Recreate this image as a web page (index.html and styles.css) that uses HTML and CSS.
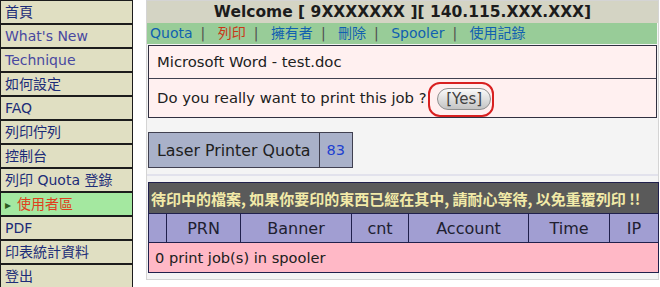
FILE: index.html
```html
<!DOCTYPE html>
<html lang="zh-Hant">
<head>
    <meta charset="UTF-8">
    <title>Printer - 使用者區</title>
    <link rel="stylesheet" href="styles.css">
</head>
<body>

    <ul class="menu">
        <li><a href="#">首頁</a></li>
        <li class="en"><a href="#">What's New</a></li>
        <li class="en"><a href="#">Technique</a></li>
        <li><a href="#">如何設定</a></li>
        <li><a href="#">FAQ</a></li>
        <li><a href="#">列印佇列</a></li>
        <li><a href="#">控制台</a></li>
        <li><a href="#">列印 Quota 登錄</a></li>
        <li class="current"><a href="#">使用者區</a></li>
        <li><a href="#">PDF</a></li>
        <li><a href="#">印表統計資料</a></li>
        <li><a href="#">登出</a></li>
    </ul>

    <div class="panel">
        <div class="welcome">Welcome [ 9XXXXXXX ][ 140.115.XXX.XXX]</div>
        <div class="tabs">
            <a href="#">Quota</a><span class="sep">|</span>
            <a href="#" class="active">列印</a><span class="sep">|</span>
            <a href="#">擁有者</a><span class="sep">|</span>
            <a href="#">刪除</a><span class="sep">|</span>
            <a href="#">Spooler</a><span class="sep">|</span>
            <a href="#">使用記錄</a>
        </div>

        <div class="confirm">
            <div class="confirm-row">Microsoft Word - test.doc</div>
            <div class="confirm-row">
                Do you really want to print this job ?
                <span class="mark"><button class="yes">[Yes]</button></span>
            </div>
        </div>

        <table class="quota">
            <tr>
                <td>Laser Printer Quota</td>
                <td class="num">83</td>
            </tr>
        </table>

        <div class="rule"></div>

        <table class="spool">
            <colgroup>
                <col class="c0">
                <col class="c1">
                <col class="c2">
                <col class="c3">
                <col class="c4">
                <col class="c5">
                <col class="c6">
            </colgroup>
            <tr>
                <th colspan="7" class="notice">待印中的檔案, 如果你要印的東西已經在其中, 請耐心等待, 以免重覆列印 !!</th>
            </tr>
            <tr class="cols">
                <td></td>
                <td>PRN</td>
                <td>Banner</td>
                <td>cnt</td>
                <td>Account</td>
                <td>Time</td>
                <td>IP</td>
            </tr>
            <tr class="empty">
                <td colspan="7">0 print job(s) in spooler</td>
            </tr>
        </table>
    </div>

</body>
</html>
```

FILE: styles.css
```css
body {
    margin: 0;
    display: flex;
    align-items: flex-start;
    gap: 13px;
    font-family: "DejaVu Sans", Verdana, "Noto Sans CJK TC", sans-serif;
    font-size: 14.8px;
    background-color: #ffffff;
}
a {
    text-decoration: none;
}

/* left menu */
.menu {
    list-style: none;
    margin: 0;
    padding: 0;
    width: 131px;
    border: 1px solid #1c1c1c;
    background-color: #e0dfc2;
}
.menu li {
    height: 22px;
    line-height: 22px;
    border-bottom: 2px solid #1c1c1c;
    padding-left: 4px;
    font-size: 14px;
}
.menu li:last-child {
    border-bottom: none;
}
.menu a {
    color: #1c2c78;
}
.menu li.en a {
    color: #4848a0;
}
.menu li.current {
    background-color: #a4e8a0;
}
.menu li.current a {
    color: #e0401c;
}
.menu li.current::before {
    content: "▸";
    color: #2c5c20;
    font-size: 12px;
    margin-right: 6px;
}

/* main panel */
.panel {
    width: 511px;
    background-color: #f4f4f4;
    border: 1px solid #d4d4d4;
    padding-bottom: 6px;
}
.welcome {
    background-color: #d4d4c4;
    text-align: center;
    font-weight: bold;
    font-size: 15.5px;
    height: 22px;
    line-height: 22px;
    color: #1c1c1c;
}
.tabs {
    background-color: #98cc98;
    height: 21px;
    line-height: 21px;
    padding-left: 3px;
    font-size: 14px;
    margin-right: 1px;
}
.tabs a {
    color: #1060b0;
}
.tabs a.active {
    color: #c83818;
}
.tabs .sep {
    color: #505050;
    margin: 0 8px;
}

.confirm {
    margin: 1px 1px 0 1px;
    background-color: #fff0f0;
    border: 1px solid #303040;
}
.confirm-row {
    height: 32px;
    line-height: 32px;
    padding-left: 8px;
    color: #202020;
}
.confirm-row + .confirm-row {
    border-top: 1px solid #404050;
    height: 38px;
    line-height: 38px;
}
.mark {
    display: inline-block;
    border: 2px solid #d82020;
    border-radius: 12px;
    padding: 4px 1px 5px 7px;
    line-height: 20px;
    vertical-align: middle;
    margin-left: -3px;
}
.yes {
    font-family: "DejaVu Sans", Verdana, sans-serif;
    font-size: 15px;
    color: #404040;
    border: 1px solid #909090;
    border-radius: 11px;
    padding: 1px 8px;
    height: 22px;
    background: linear-gradient(#fafafa, #c4c4c4);
}

.quota {
    border-collapse: collapse;
    margin: 14px 0 0 1px;
    background-color: #a9b1c9;
    font-size: 15.8px;
}
.quota td {
    border: 1px solid #404050;
    height: 34px;
    padding: 0 8px;
    color: #202020;
}
.quota td.num {
    color: #2040d0;
    font-size: 14.5px;
    padding: 0 7px;
}

.rule {
    height: 2px;
    background-color: #e2e2ec;
    margin: 6px 0 6px 0;
}

.spool {
    border-collapse: collapse;
    table-layout: fixed;
    width: 510px;
    margin-left: 1px;
    font-size: 16px;
}
.spool td, .spool th {
    border: 1px solid #20204c;
    padding: 0;
}
.spool .c0 { width: 18px; }
.spool .c1 { width: 74px; }
.spool .c2 { width: 111px; }
.spool .c3 { width: 57px; }
.spool .c4 { width: 120px; }
.spool .c5 { width: 81px; }
.spool .c6 { width: 49px; }
.spool .notice {
    background-color: #5a5a5a;
    color: #f2eaa8;
    font-family: "Noto Sans CJK TC", sans-serif;
    font-weight: bold;
    font-size: 15px;
    height: 30px;
    text-align: left;
    padding-left: 2px;
    white-space: nowrap;
}
.spool .cols td {
    background-color: #a19ed2;
    text-align: center;
    height: 28px;
    color: #202030;
}
.spool .empty td {
    background-color: #ffb8c6;
    height: 29px;
    padding-left: 6px;
    color: #202020;
    font-size: 14.6px;
}
```
